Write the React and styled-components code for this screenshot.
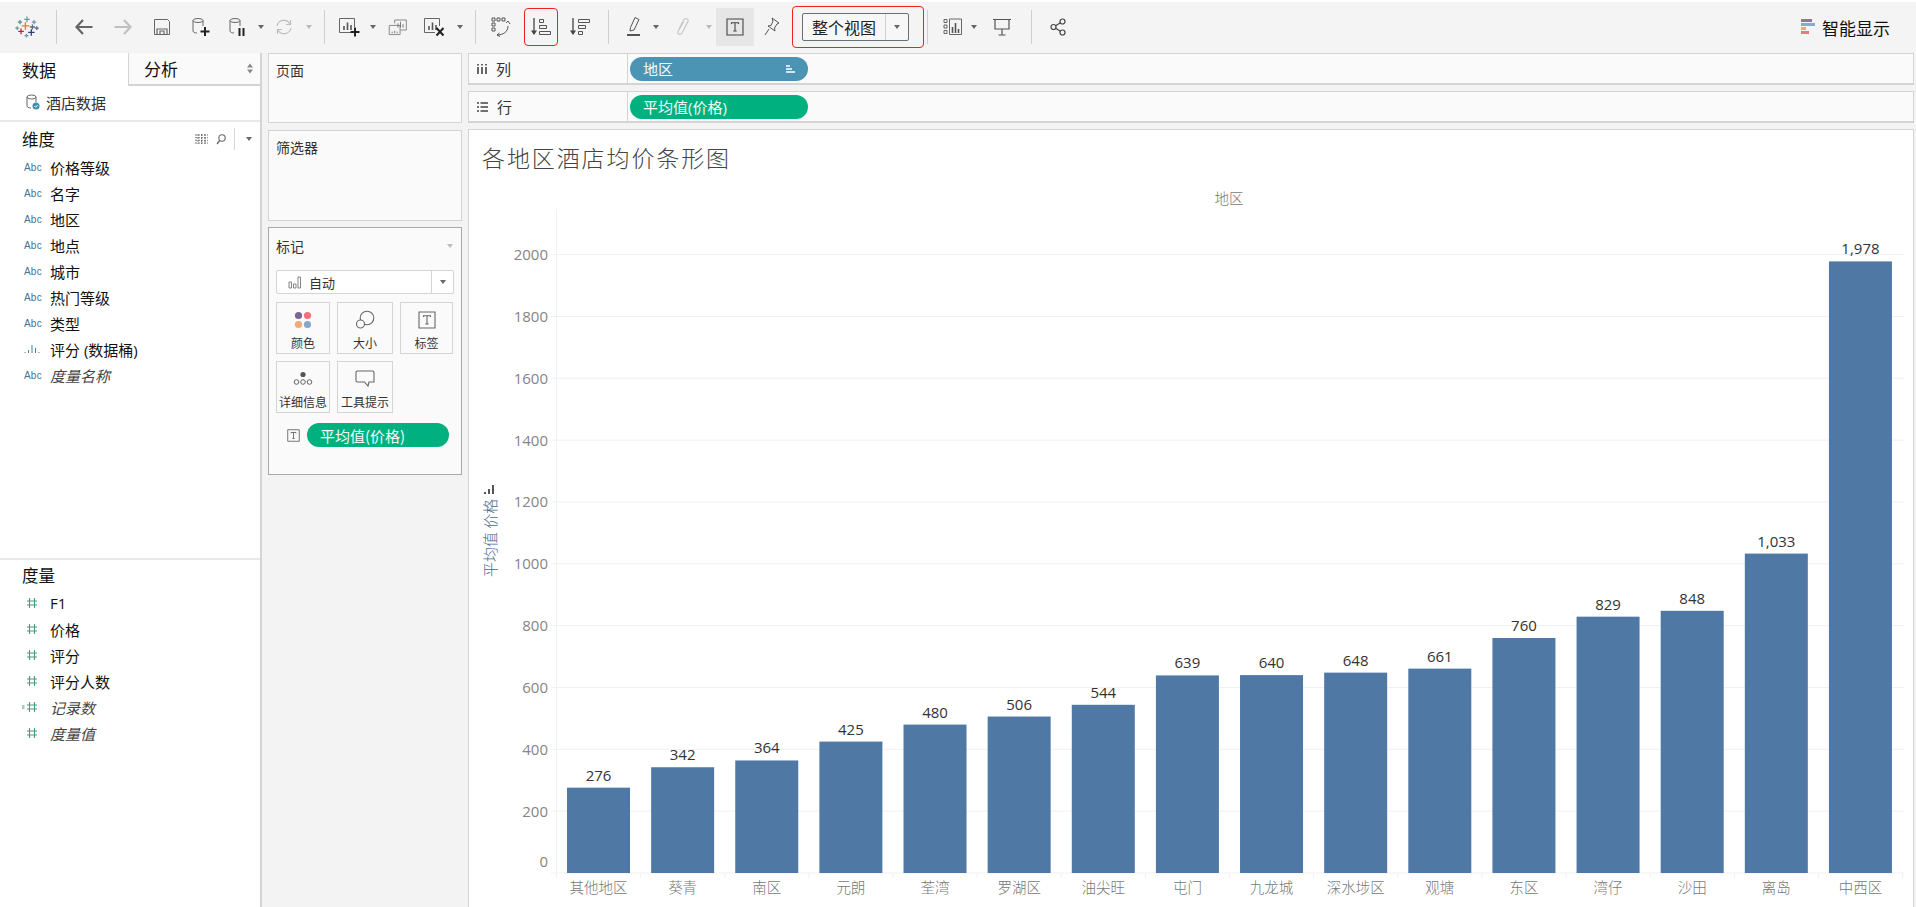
import React from "react";
import styled, { createGlobalStyle } from "styled-components";

const GlobalStyle = createGlobalStyle`
  html, body {
    margin: 0;
    padding: 0;
    background: #f3f3f3;
    overflow: hidden;
  }
  * { box-sizing: border-box; }
`;

const FONT = `"Open Sans", "Noto Sans CJK SC", sans-serif`;
const CJK = `"Noto Sans CJK SC", "Open Sans", sans-serif`;
const BORDER = "#d4d4d4";

const dimensions = [
  { name: "价格等级" },
  { name: "名字" },
  { name: "地区" },
  { name: "地点" },
  { name: "城市" },
  { name: "热门等级" },
  { name: "类型" },
  { name: "评分 (数据桶)", bins: true },
  { name: "度量名称", italic: true },
];

const measures = [
  { name: "F1" },
  { name: "价格" },
  { name: "评分" },
  { name: "评分人数" },
  { name: "记录数", italic: true, calc: true },
  { name: "度量值", italic: true },
];

const regions = [
  ["其他地区", 276], ["葵青", 342], ["南区", 364], ["元朗", 425],
  ["荃湾", 480], ["罗湖区", 506], ["油尖旺", 544], ["屯门", 639],
  ["九龙城", 640], ["深水埗区", 648], ["观塘", 661], ["东区", 760],
  ["湾仔", 829], ["沙田", 848], ["离岛", 1033], ["中西区", 1978],
];

const ticks = [0, 200, 400, 600, 800, 1000, 1200, 1400, 1600, 1800, 2000];

const Page = styled.div`
  width: 1916px;
  height: 907px;
  overflow: hidden;
  display: flex;
  flex-direction: column;
  background: #f3f3f3;
  font-family: ${FONT};
  color: #222;
`;

const TopStrip = styled.div`
  height: 2px;
  background: #fff;
`;

const Toolbar = styled.div`
  height: 50px;
  padding-left: 3px;
  display: flex;
  align-items: center;
  background: #f4f4f4;
`;

const ToolBtn = styled.div`
  width: ${(p) => p.$w || 39}px;
  height: 38px;
  flex: none;
  margin-left: ${(p) => p.$ml || 0}px;
  display: flex;
  align-items: center;
  justify-content: center;
  background: ${(p) => (p.$active ? "#e6e6e6" : "transparent")};
  border: ${(p) => (p.$marked ? "1px solid #f0231c" : "none")};
  border-radius: ${(p) => (p.$marked ? "4px" : "0")};
`;

const Caret = styled.span`
  flex: none;
  width: 0;
  height: 0;
  border-left: 3.5px solid transparent;
  border-right: 3.5px solid transparent;
  border-top: 4px solid ${(p) => p.$color || "#666"};
`;

const CaretSlot = styled.div`
  width: ${(p) => p.$w || 10}px;
  flex: none;
  display: flex;
  justify-content: center;
`;

const ToolSep = styled.div`
  width: 1px;
  height: 34px;
  flex: none;
  background: #cfcfcf;
  margin-left: ${(p) => p.$ml}px;
  margin-right: ${(p) => p.$mr}px;
`;

const FitBox = styled.div`
  width: 132px;
  height: 42px;
  flex: none;
  margin-left: 2px;
  padding: 0 14px 0 9px;
  display: flex;
  align-items: center;
  border: 1px solid #f0231c;
  border-radius: 4px;
`;

const FitSelect = styled.div`
  width: 108px;
  height: 28px;
  display: flex;
  align-items: center;
  border: 1px solid #6e6e6e;
  border-radius: 2px;
  background: #f7f7f7;
`;

const FitText = styled.span`
  flex: 1;
  text-align: center;
  font-size: 16px;
  font-family: ${CJK};
  color: #222;
`;

const FitArrow = styled.span`
  width: 23px;
  height: 100%;
  display: flex;
  align-items: center;
  justify-content: center;
  border-left: 1px solid #d0d0d0;
`;

const ShowMe = styled.div`
  margin-left: auto;
  padding-right: 26px;
  display: flex;
  align-items: center;
  gap: 6px;
  font-size: 17px;
  font-family: ${CJK};
  color: #111;
`;

const Body = styled.div`
  flex: 1;
  min-height: 0;
  padding-top: 1px;
  display: flex;
`;

const Sidebar = styled.aside`
  width: 262px;
  flex: none;
  background: #fff;
  border-right: 2px solid ${BORDER};
  display: flex;
  flex-direction: column;
`;

const Tabs = styled.div`
  height: 33px;
  display: flex;
`;

const Tab = styled.div`
  width: ${(p) => p.$w}px;
  padding-left: ${(p) => p.$pl}px;
  padding-right: 7px;
  display: flex;
  align-items: center;
  justify-content: space-between;
  font-size: 17px;
  font-family: ${CJK};
  color: #111;
  background: ${(p) => (p.$active ? "#fff" : "#fafafa")};
  border-left: ${(p) => (p.$active ? "none" : `1px solid ${BORDER}`)};
  border-bottom: ${(p) => (p.$active ? "none" : `2px solid ${BORDER}`)};
`;

const Source = styled.div`
  height: 36px;
  padding: 0 0 2px 26px;
  display: flex;
  align-items: center;
  gap: 6px;
  font-size: 15px;
  font-family: ${CJK};
  color: #333;
  border-bottom: 2px solid #e8e8e8;
`;

const FieldSection = styled.section`
  height: ${(p) => p.$h}px;
  flex: none;
  border-bottom: ${(p) => (p.$line ? "2px solid #e8e8e8" : "none")};
`;

const SectionHead = styled.div`
  height: ${(p) => p.$h}px;
  padding: ${(p) => p.$pt || 0}px 8px 0 22px;
  display: flex;
  align-items: center;
  justify-content: space-between;
  font-size: 16.5px;
  font-family: ${CJK};
  color: #111;
`;

const HeadTools = styled.div`
  display: flex;
  align-items: center;
  gap: 8px;
`;

const HeadSep = styled.span`
  width: 1px;
  height: 22px;
  margin: 0 3px 0 0;
  background: #d8d8d8;
`;

const FieldRow = styled.div`
  height: 26px;
  display: flex;
  align-items: center;
  font-size: 15px;
  font-family: ${FONT};
  font-style: ${(p) => (p.$italic ? "italic" : "normal")};
  color: ${(p) => (p.$italic ? "#444" : "#111")};
`;

const FieldIcon = styled.span`
  width: 50px;
  flex: none;
  padding-left: ${(p) => p.$pl || 24}px;
  display: flex;
  align-items: center;
  font-style: normal;
`;

const Abc = styled.span`
  font-family: "Liberation Sans", sans-serif;
  font-size: 10px;
  letter-spacing: 0.2px;
  color: #3f7391;
`;

const Middle = styled.div`
  width: 194px;
  flex: none;
  margin: 0 6px;
  display: flex;
  flex-direction: column;
`;

const Card = styled.div`
  height: ${(p) => p.$h}px;
  margin-bottom: ${(p) => p.$mb || 0}px;
  padding: ${(p) => (p.$dark ? "9px" : "6px")} 7px;
  background: #fafafa;
  border: 1px solid ${(p) => (p.$dark ? "#a8a8a8" : BORDER)};
  font-size: 14px;
  font-family: ${CJK};
  color: #333;
`;

const MarksHead = styled.div`
  height: 18px;
  margin-bottom: 15px;
  padding-right: 1px;
  display: flex;
  align-items: center;
  justify-content: space-between;
`;

const MarkType = styled.div`
  height: 24px;
  display: flex;
  align-items: center;
  background: #fff;
  border: 1px solid ${BORDER};
  border-radius: 2px;
  font-size: 13px;
  margin-bottom: 8px;
`;

const MarkTypeName = styled.div`
  flex: 1;
  padding-left: 11px;
  display: flex;
  align-items: center;
  gap: 7px;
`;

const MarkTypeArrow = styled.div`
  width: 22px;
  height: 100%;
  display: flex;
  align-items: center;
  justify-content: center;
  border-left: 1px solid ${BORDER};
`;

const MarkGrid = styled.div`
  display: grid;
  grid-template-columns: 54px 56px 53px;
  grid-auto-rows: 52px;
  column-gap: 7px;
  row-gap: 7px;
`;

const MarkBtn = styled.div`
  display: flex;
  flex-direction: column;
  align-items: center;
  justify-content: flex-end;
  padding-bottom: 2px;
  border: 1px solid ${BORDER};
  background: #fafafa;
  font-size: 12px;
  line-height: 17px;
  white-space: nowrap;
  color: #333;
`;

const MarkGlyph = styled.div`
  height: 28px;
  display: flex;
  align-items: center;
`;

const MarkField = styled.div`
  margin-top: 10px;
  padding-left: 11px;
  display: flex;
  align-items: center;
  gap: 7px;
`;

const Pill = styled.div`
  width: ${(p) => p.$w}px;
  height: 24px;
  flex: none;
  padding: 0 13px;
  display: flex;
  align-items: center;
  justify-content: space-between;
  border-radius: 12px;
  background: ${(p) => p.$color};
  font-size: 15px;
  color: #f4fbf8;
`;

const Main = styled.main`
  flex: 1;
  min-width: 0;
  margin-right: 2px;
  display: flex;
  flex-direction: column;
`;

const Shelf = styled.div`
  height: ${(p) => p.$h}px;
  margin-bottom: 6px;
  display: flex;
  background: #fafafa;
  border: 1px solid ${BORDER};
  border-width: 1px 1px 2px 1px;
  flex: none;
`;

const ShelfName = styled.div`
  width: 159px;
  flex: none;
  padding-left: 8px;
  display: flex;
  align-items: center;
  gap: 9px;
  border-right: 1px solid ${BORDER};
  font-size: 15px;
  font-family: ${CJK};
  color: #333;
`;

const ShelfBody = styled.div`
  flex: 1;
  padding-left: 2px;
  display: flex;
  align-items: center;
`;

const ChartCard = styled.div`
  flex: 1;
  min-height: 0;
  display: flex;
  flex-direction: column;
  background: #fff;
  border: 1px solid ${BORDER};
  border-bottom: none;
  overflow: hidden;
`;

const Title = styled.h1`
  height: 51px;
  flex: none;
  margin: 0;
  padding: 10px 0 0 13px;
  font-family: ${CJK};
  font-size: 23px;
  line-height: 34px;
  font-weight: 300;
  letter-spacing: 1.9px;
  color: #444;
`;

const AxisText = styled.text`
  font-family: ${FONT};
  font-size: 15px;
  fill: #858585;
`;

const BarValue = styled.text`
  font-family: ${FONT};
  font-size: 15px;
  fill: #333;
`;

const CategoryText = styled.text`
  font-family: ${CJK};
  font-size: 14.5px;
  font-weight: 300;
  fill: #777;
`;

const AxisTitle = styled.text`
  font-family: ${CJK};
  font-size: 15px;
  font-weight: 300;
  fill: #4d6a8c;
`;

const Svg = ({ w = 24, h = 24, vb, children }) => (
  <svg width={w} height={h} viewBox={vb || `0 0 ${w} ${h}`} fill="none">
    {children}
  </svg>
);

const TableauLogo = () => {
  const marks = [
    [12, 5, 2.6, "#7099a6"], [5.5, 7.5, 2, "#59879b"], [18.5, 7.5, 2, "#7099a6"],
    [10.5, 11, 3.5, "#e8762b"], [17, 12, 2.4, "#5b6591"], [3, 13, 1.8, "#7099a6"],
    [21, 13, 1.8, "#5b6591"], [6.5, 16, 2.6, "#c72035"], [16, 17, 3, "#1f447e"],
    [11.5, 20, 1.8, "#7099a6"],
  ];
  return (
    <Svg w={26} h={26} vb="0 0 24 24">
      {marks.map(([x, y, r, c]) => (
        <path key={`${x}-${y}`} d={`M${x - r} ${y}H${x + r}M${x} ${y - r}V${y + r}`} stroke={c} strokeWidth="1.2" />
      ))}
    </Svg>
  );
};

const ArrowIcon = ({ dir, color }) => (
  <Svg w={20} h={20}>
    <path
      d={dir === "left" ? "M18.5 10H2.5M9 3 2.5 10 9 17" : "M1.5 10h16M11 3l6.5 7-6.5 7"}
      stroke={color}
      strokeWidth="2.2"
    />
  </Svg>
);

const SaveIcon = () => (
  <Svg w={18} h={18}>
    <path d="M1.5 1.5h13l2 2v13h-15z" stroke="#666" strokeWidth="1" />
    <path d="M4 16v-5h10v5M7 16v-3h4v3" stroke="#666" strokeWidth="1.2" />
  </Svg>
);

const Cylinder = () => (
  <>
    <ellipse cx="7" cy="3.5" rx="5" ry="2" stroke="#666" />
    <path d="M2 3.5V14c0 1.2 2 2 4 2M12 3.5V9" stroke="#666" />
  </>
);

const DataAddIcon = () => (
  <Svg w={20} h={20}>
    <Cylinder />
    <path d="M14 10v9M9.5 14.5h9" stroke="#222" strokeWidth="2" />
  </Svg>
);

const DataPauseIcon = () => (
  <Svg w={20} h={20}>
    <Cylinder />
    <path d="M11.5 11v8M15.5 11v8" stroke="#222" strokeWidth="2" />
  </Svg>
);

const RefreshIcon = () => (
  <Svg w={20} h={20}>
    <path d="M3 9a7 7 0 0 1 13-2M17 11a7 7 0 0 1-13 2" stroke="#bdbdbd" strokeWidth="1.2" />
    <path d="M16.5 3v4.5H12M3.5 17v-4.5H8" stroke="#bdbdbd" strokeWidth="1.2" />
  </Svg>
);

const SheetBars = () => (
  <path d="M6 12V8M9.5 12V4.5M13 12V7" stroke="#555" strokeWidth="1.6" />
);

const NewSheetIcon = () => (
  <Svg w={24} h={20}>
    <path d="M13 15.5H1.5v-14h15V10" stroke="#666" />
    <g transform="translate(0 1)"><SheetBars /></g>
    <path d="M17 10.5v9M12.5 15h9" stroke="#222" strokeWidth="2" />
  </Svg>
);

const DuplicateIcon = () => (
  <Svg w={20} h={17} vb="0 0 24 20">
    <path d="M8 5V1h14v12h-7" stroke="#777" />
    <path d="M1.5 7.5h13v11h-13z" stroke="#777" fill="#f4f4f4" />
    <path d="M12 10V5M15 10V3M18 10V6M5 15v2M8 14v3M11 15v2" stroke="#666" />
  </Svg>
);

const ClearSheetIcon = () => (
  <Svg w={24} h={20}>
    <path d="M12 15.5H1.5v-14h15V9" stroke="#666" />
    <g transform="translate(0 1)"><SheetBars /></g>
    <path d="m13.5 11 7 7.5M20.5 11l-7 7.5" stroke="#222" strokeWidth="2" />
  </Svg>
);

const SwapIcon = () => (
  <Svg w={20} h={20}>
    <path d="M1 1h3v3H1zM6 1h3v3H6zM11 1h3v3h-3zM1 6h3v3H1zM1 11h3v3H1z" stroke="#555" />
    <path d="M6 18c6 0 11-3 11-9" stroke="#555" />
    <path d="m15 6 2-2 2 3M8.5 16l-2.5 2 3 1.5" stroke="#555" />
  </Svg>
);

const SortIcon = ({ desc }) => (
  <Svg w={22} h={20}>
    <path d="M4 1v16" stroke="#444" strokeWidth="1.3" />
    <path d="M1 13.5h6L4 18z" fill="#444" />
    {desc ? (
      <path d="M9.5 2.5h11v3h-11zM9.5 8.5h7v3h-7zM9.5 14.5h4v3h-4z" stroke="#555" />
    ) : (
      <path d="M9.5 2.5h4v3h-4zM9.5 8.5h7v3h-7zM9.5 14.5h11v3h-11z" stroke="#555" />
    )}
  </Svg>
);

const HighlightIcon = () => (
  <Svg w={16} h={24}>
    <path d="M9 2.5 13 4.5 8 15l-4 1 .5-3.5z" stroke="#555" />
    <path d="M1 20h13" stroke="#555" strokeWidth="2" />
  </Svg>
);

const ClipIcon = () => (
  <Svg w={16} h={22}>
    <path d="M4 13 9 3.5c1-2 5-.5 4 2L7 17c-1.5 2.5-5 1-4-1.5L8.5 6" stroke="#c6c6c6" strokeWidth="1.2" />
  </Svg>
);

const TBox = ({ s = 18, color = "#444" }) => (
  <svg width={s} height={s} viewBox="0 0 18 18" fill="none">
    <path d="M1 1h16v16H1z" stroke={color} strokeWidth="1.1" />
    <path d="M5.5 6V4.8h7V6M9 5v8M7.3 13h3.4" stroke={color} strokeWidth="1.1" />
  </svg>
);

const PinIcon = () => (
  <Svg w={18} h={20}>
    <path d="m9 1 7 5-2 1-2.5 4 .5 3-7-5 3-.5L10 4z" stroke="#555" fill="#f4f4f4" />
    <path d="M6 12 2 18" stroke="#555" />
  </Svg>
);

const ChartTypeIcon = () => (
  <Svg w={20} h={18}>
    <path d="M1 1.5h3v3H1zM1 7h3v3H1zM1 12.5h3v3H1zM6.5 1h12v15.5h-12z" stroke="#666" />
    <path d="M9.5 15V9M12.5 15V5M15.5 15v-4" stroke="#555" strokeWidth="1.6" />
  </Svg>
);

const PresentIcon = () => (
  <Svg w={20} h={20}>
    <path d="M1 2.5h18M3 3v9h14V3M10 12v6M6.5 18h7" stroke="#555" strokeWidth="1.2" />
  </Svg>
);

const ShareIcon = () => (
  <Svg w={16} h={18}>
    <circle cx="3.5" cy="9" r="2.5" stroke="#444" strokeWidth="1.2" />
    <circle cx="12.5" cy="3.5" r="2.5" stroke="#444" strokeWidth="1.2" />
    <circle cx="12.5" cy="14.5" r="2.5" stroke="#444" strokeWidth="1.2" />
    <path d="m5.7 7.7 4.6-2.9M5.7 10.3l4.6 2.9" stroke="#444" strokeWidth="1.2" />
  </Svg>
);

const ShowMeIcon = () => (
  <svg width="15" height="16" viewBox="0 0 15 16">
    <rect x="0" y="0" width="11" height="3" fill="#8a78a0" />
    <rect x="0" y="4" width="14" height="3" fill="#85a9cf" />
    <rect x="0" y="8" width="5" height="3" fill="#f2a772" />
    <rect x="0" y="12" width="8" height="3" fill="#f2767f" />
  </svg>
);

const SourceIcon = () => (
  <Svg w={14} h={16}>
    <ellipse cx="5.5" cy="3" rx="4.5" ry="2" stroke="#666" />
    <path d="M1 3v9c0 1 1.5 2 4 2M10 3v5" stroke="#666" />
    <circle cx="10" cy="12" r="3.5" fill="#3f8db1" />
    <path d="m8.3 12 1.3 1.3 2-2.3" stroke="#fff" />
  </Svg>
);

const SortArrowsIcon = () => (
  <Svg w={6} h={11}>
    <path d="M0 4.5h6L3 0.5zM0 6.5h6L3 10.5z" fill="#888" />
  </Svg>
);

const GridMiniIcon = () => (
  <Svg w={13} h={10}>
    <path d="M0 1h13M0 3.7h13M0 6.3h13M0 9h13M3 0v10M6.5 0v10M10 0v10" stroke="#777" strokeWidth="1" strokeDasharray="2 1" />
  </Svg>
);

const SearchMiniIcon = () => (
  <Svg w={10} h={11}>
    <circle cx="6" cy="4" r="3.2" stroke="#666" strokeWidth="1.1" />
    <path d="M3.7 6.5 1 10" stroke="#666" strokeWidth="1.3" />
  </Svg>
);

const BinsIcon = () => (
  <Svg w={16} h={10}>
    <path d="M1 9V8M4.5 9V6M8 9V1M11.5 9V4M15 9V8" stroke="#4e7f9c" />
  </Svg>
);

const HashIcon = ({ calc }) => (
  <Svg w={calc ? 16 : 12} h={12}>
    <g transform={calc ? "translate(4 0)" : undefined} stroke="#4c9c7a" strokeWidth="1.1">
      <path d="M3.5 1v10M8.5 1v10M1 4h10M1 8h10" />
    </g>
    {calc && <path d="M0 5h2.5M0 7h2.5" stroke="#4c9c7a" strokeWidth="1" />}
  </Svg>
);

const BarsIcon = ({ stroke = "#fff" }) => (
  <Svg w={9} h={8}>
    <path d="M0 1h4M0 4h6M0 7h9" stroke={stroke} strokeWidth="1.4" />
  </Svg>
);

const AutoMarkIcon = () => (
  <Svg w={14} h={13}>
    <path d="M1 6h2.5v6H1zM5.5 8H8v4H5.5zM10 1h2.5v11H10z" stroke="#777" strokeWidth="0.9" />
  </Svg>
);

const ColorMarkIcon = () => (
  <svg width="18" height="18" viewBox="0 0 18 18">
    <circle cx="4.5" cy="4.5" r="3.6" fill="#7a6493" />
    <circle cx="13.5" cy="4.5" r="3.6" fill="#f2707c" />
    <circle cx="4.5" cy="13.5" r="3.6" fill="#f3a878" />
    <circle cx="13.5" cy="13.5" r="3.6" fill="#84a8cf" />
  </svg>
);

const SizeMarkIcon = () => (
  <Svg w={20} h={20}>
    <circle cx="12" cy="8" r="6.8" stroke="#666" strokeWidth="1.1" />
    <circle cx="5.5" cy="14" r="4" stroke="#666" strokeWidth="1.1" fill="#fafafa" />
  </Svg>
);

const DetailMarkIcon = () => (
  <Svg w={20} h={16}>
    <circle cx="10" cy="3.5" r="2.6" fill="#555" />
    <circle cx="3.5" cy="11" r="2.3" stroke="#666" />
    <circle cx="10" cy="11" r="2.3" stroke="#666" />
    <circle cx="16.5" cy="11" r="2.3" stroke="#666" />
  </Svg>
);

const TooltipMarkIcon = () => (
  <Svg w={20} h={18}>
    <path d="M2.5 1h15a1.5 1.5 0 0 1 1.5 1.5V12H14l-1 4-3.5-4h-7A1.5 1.5 0 0 1 1 10.5v-8A1.5 1.5 0 0 1 2.5 1z" stroke="#666" strokeWidth="1.1" />
  </Svg>
);

const Chart = () => {
  const toY = (v) => 873 - v * 0.3092;
  const step = 84.13;
  return (
    <svg width="1444" height="726" viewBox="469 181 1444 726">
      {ticks.map((t) => (
        <g key={t}>
          <line x1="551" x2="1904" y1={toY(t)} y2={toY(t)} stroke="#f1f1f1" />
          <AxisText x="548" y={t === 0 ? 867 : toY(t) + 5.5} textAnchor="end">
            {t}
          </AxisText>
        </g>
      ))}
      <line x1="556.5" x2="556.5" y1="209" y2="878" stroke="#f1f1f1" />
      <CategoryText x="1229" y="204" textAnchor="middle">地区</CategoryText>
      {regions.map(([name, value], i) => {
        const x = 567 + i * step;
        const y = toY(value);
        return (
          <g key={name}>
            <rect x={x} y={y} width="63" height={873 - y} fill="#4f78a5" />
            <line x1={556.5 + (i + 1) * step} x2={556.5 + (i + 1) * step} y1="873" y2="878" stroke="#f1f1f1" />
            <BarValue x={x + 31.5} y={y - 7} textAnchor="middle">
              {value.toLocaleString("en-US")}
            </BarValue>
            <CategoryText x={x + 31.5} y="893" textAnchor="middle">{name}</CategoryText>
          </g>
        );
      })}
      <AxisTitle transform="translate(496 577) rotate(-90)">平均值 价格</AxisTitle>
      <path d="M485 494v-2M489 494v-5M493 494v-9" stroke="#555" strokeWidth="2" />
    </svg>
  );
};

const App = () => {
  return (
    <Page>
      <GlobalStyle />
      <TopStrip />
      <Toolbar>
        <ToolBtn $w={48}><TableauLogo /></ToolBtn>
        <ToolSep $ml={5} $mr={7} />
        <ToolBtn><ArrowIcon dir="left" color="#666" /></ToolBtn>
        <ToolBtn><ArrowIcon dir="right" color="#c0c0c0" /></ToolBtn>
        <ToolBtn><SaveIcon /></ToolBtn>
        <ToolBtn><DataAddIcon /></ToolBtn>
        <ToolBtn $w={36}><DataPauseIcon /></ToolBtn>
        <CaretSlot><Caret /></CaretSlot>
        <ToolBtn $w={36}><RefreshIcon /></ToolBtn>
        <CaretSlot $w={14}><Caret $color="#bbb" /></CaretSlot>
        <ToolSep $ml={8} $mr={7} />
        <ToolBtn $w={36}><NewSheetIcon /></ToolBtn>
        <CaretSlot><Caret /></CaretSlot>
        <ToolBtn $w={40}><DuplicateIcon /></ToolBtn>
        <ToolBtn $w={34}><ClearSheetIcon /></ToolBtn>
        <CaretSlot $w={16}><Caret /></CaretSlot>
        <ToolSep $ml={7} $mr={6} />
        <ToolBtn $w={38}><SwapIcon /></ToolBtn>
        <ToolBtn $w={34} $ml={4} $marked><SortIcon /></ToolBtn>
        <ToolBtn $w={44}><SortIcon desc /></ToolBtn>
        <ToolSep $ml={6} $mr={7} />
        <ToolBtn $w={36}><HighlightIcon /></ToolBtn>
        <CaretSlot $w={8}><Caret /></CaretSlot>
        <ToolBtn $w={38} $ml={4}><ClipIcon /></ToolBtn>
        <CaretSlot $w={14}><Caret $color="#bbb" /></CaretSlot>
        <ToolBtn $w={38} $active><TBox /></ToolBtn>
        <ToolBtn $w={36}><PinIcon /></ToolBtn>
        <FitBox>
          <FitSelect>
            <FitText>整个视图</FitText>
            <FitArrow><Caret /></FitArrow>
          </FitSelect>
        </FitBox>
        <ToolSep $ml={3} $mr={10} />
        <ToolBtn $w={30}><ChartTypeIcon /></ToolBtn>
        <CaretSlot $w={12}><Caret /></CaretSlot>
        <ToolBtn $w={36} $ml={4}><PresentIcon /></ToolBtn>
        <ToolSep $ml={11} $mr={10} />
        <ToolBtn $w={32}><ShareIcon /></ToolBtn>
        <ShowMe>
          <ShowMeIcon />
          智能显示
        </ShowMe>
      </Toolbar>
      <Body>
        <Sidebar>
          <Tabs>
            <Tab $w={128} $pl={22} $active>数据</Tab>
            <Tab $w={132} $pl={15}>
              分析
              <SortArrowsIcon />
            </Tab>
          </Tabs>
          <Source><SourceIcon />酒店数据</Source>
          <FieldSection $h={438} $line>
            <SectionHead $h={32} $pt={2}>
              维度
              <HeadTools>
                <GridMiniIcon />
                <SearchMiniIcon />
                <HeadSep />
                <Caret />
              </HeadTools>
            </SectionHead>
            {dimensions.map((d) => (
              <FieldRow key={d.name} $italic={d.italic}>
                <FieldIcon>{d.bins ? <BinsIcon /> : <Abc>Abc</Abc>}</FieldIcon>
                {d.name}
              </FieldRow>
            ))}
          </FieldSection>
          <FieldSection $h={300}>
            <SectionHead $h={30}>度量</SectionHead>
            {measures.map((m) => (
              <FieldRow key={m.name} $italic={m.italic}>
                <FieldIcon $pl={m.calc ? 22 : 26}>
                  <HashIcon calc={m.calc} />
                </FieldIcon>
                {m.name}
              </FieldRow>
            ))}
          </FieldSection>
        </Sidebar>
        <Middle>
          <Card $h={70} $mb={7}>页面</Card>
          <Card $h={91} $mb={6}>筛选器</Card>
          <Card $h={248} $dark>
            <MarksHead>
              标记
              <Caret $color="#bdbdbd" />
            </MarksHead>
            <MarkType>
              <MarkTypeName><AutoMarkIcon />自动</MarkTypeName>
              <MarkTypeArrow><Caret /></MarkTypeArrow>
            </MarkType>
            <MarkGrid>
              <MarkBtn><MarkGlyph><ColorMarkIcon /></MarkGlyph>颜色</MarkBtn>
              <MarkBtn><MarkGlyph><SizeMarkIcon /></MarkGlyph>大小</MarkBtn>
              <MarkBtn><MarkGlyph><TBox color="#666" /></MarkGlyph>标签</MarkBtn>
              <MarkBtn><MarkGlyph><DetailMarkIcon /></MarkGlyph>详细信息</MarkBtn>
              <MarkBtn><MarkGlyph><TooltipMarkIcon /></MarkGlyph>工具提示</MarkBtn>
            </MarkGrid>
            <MarkField>
              <TBox s={13} color="#555" />
              <Pill $w={142} $color="#00b180">平均值(价格)</Pill>
            </MarkField>
          </Card>
        </Middle>
        <Main>
          <Shelf $h={32}>
            <ShelfName>
              <Svg w={10} h={10}><path d="M1 3v7M5 3v7M9 3v7M1 0v1.5M5 0v1.5M9 0v1.5" stroke="#444" strokeWidth="1.6" /></Svg>
              列
            </ShelfName>
            <ShelfBody>
              <Pill $w={178} $color="#4b94b3">地区<BarsIcon /></Pill>
            </ShelfBody>
          </Shelf>
          <Shelf $h={32}>
            <ShelfName>
              <Svg w={11} h={10}><path d="M0 1h2M3.5 1H11M0 5h2M3.5 5H11M0 9h2M3.5 9H11" stroke="#444" strokeWidth="1.4" /></Svg>
              行
            </ShelfName>
            <ShelfBody>
              <Pill $w={178} $color="#00b180">平均值(价格)</Pill>
            </ShelfBody>
          </Shelf>
          <ChartCard>
            <Title>各地区酒店均价条形图</Title>
            <Chart />
          </ChartCard>
        </Main>
      </Body>
    </Page>
  );
};

export default App;
